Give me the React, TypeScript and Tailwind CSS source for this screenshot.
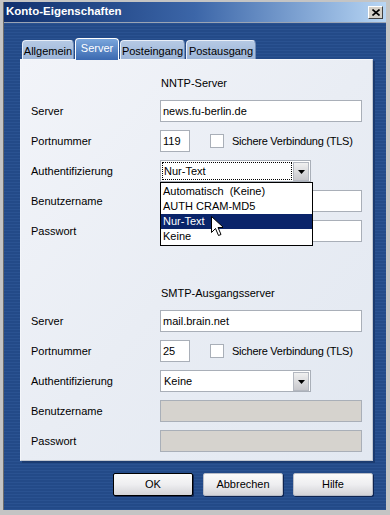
import React from 'react';

const font = "font-['Liberation_Sans',Arial,sans-serif]";

function Label({ text }: { text: string }) {
  return <div className="w-[129px] shrink-0 text-[11px] leading-[14px] text-black">{text}</div>;
}

function TextBox({ value = '', width = 'w-[202px]', disabled = false }: { value?: string; width?: string; disabled?: boolean }) {
  return (
    <div
      className={`${width} flex h-[22px] items-center border border-[#a9afb8] pl-[2px] text-[11px] text-black ${
        disabled ? 'bg-[#d6d3ce]' : 'bg-white'
      }`}
    >
      {value}
    </div>
  );
}

function CheckBox() {
  return (
    <div className="ml-[20px] flex items-center gap-[8px]">
      <div className="h-[14px] w-[14px] border border-[#a9afb8] bg-white" />
      <span className="text-[11px] leading-[14px] tracking-[-0.25px] text-black">Sichere Verbindung (TLS)</span>
    </div>
  );
}

function DropArrow() {
  return (
    <div className="my-[1px] mr-[1px] flex h-[19px] w-[16px] items-center justify-center border border-[#b4b8c0] bg-linear-to-b from-[#f0f0f0] to-[#c8c8cc]">
      <svg width="7" height="4" viewBox="0 0 7 4">
        <path d="M0 0h7L3.5 4z" fill="#000" />
      </svg>
    </div>
  );
}

function Select({ value, open = false }: { value: string; open?: boolean }) {
  const items = ['Automatisch  (Keine)', 'AUTH CRAM-MD5', 'Nur-Text', 'Keine'];
  return (
    <div className="relative">
      <div className="flex h-[22px] w-[151px] items-stretch border border-[#a9afb8] bg-white">
        <div className={`m-[1px] flex flex-1 items-center pl-[1px] text-[11px] text-black ${open ? 'border border-dotted border-black' : 'pl-[2px]'}`}>
          {value}
        </div>
        <DropArrow />
      </div>
      {open && (
        <div className="absolute left-0 top-full z-10 w-[153px] border border-black bg-white py-[1px]">
          {items.map((it) => (
            <div
              key={it}
              className={`h-[15px] whitespace-pre pl-[2px] text-[11px] leading-[15px] ${
                it === value ? 'bg-[#0a246a] text-white' : 'text-black'
              }`}
            >
              {it}
            </div>
          ))}
        </div>
      )}
    </div>
  );
}

function Row({ label, children }: { label: string; children: React.ReactNode }) {
  return (
    <div className="flex h-[22px] items-center">
      <Label text={label} />
      {children}
    </div>
  );
}

function ServerBlock({ title, server, port, auth, open, disabled }: { title: string; server: string; port: string; auth: string; open?: boolean; disabled?: boolean }) {
  return (
    <div className="flex flex-col">
      <div className="pl-[130px] text-[11px] leading-[14px] text-black">{title}</div>
      <div className="mt-[10px] flex flex-col gap-[8px]">
        <Row label="Server">
          <TextBox value={server} />
        </Row>
        <Row label="Portnummer">
          <TextBox value={port} width="w-[30px]" />
          <CheckBox />
        </Row>
        <Row label="Authentifizierung">
          <Select value={auth} open={open} />
        </Row>
        <Row label="Benutzername">
          <TextBox disabled={disabled} />
        </Row>
        <Row label="Passwort">
          <TextBox disabled={disabled} />
        </Row>
      </div>
    </div>
  );
}

function Tab({ text, active = false, width }: { text: string; active?: boolean; width: string }) {
  if (active) {
    return (
      <div
        className={`${width} relative z-10 mb-[-1px] flex h-[22px] items-start justify-center rounded-t-[4px] border border-b-0 border-white bg-linear-to-b from-[#7aa6dc] to-[#3b69b0] pt-[2px] text-[11px] leading-[14px] text-white`}
      >
        {text}
      </div>
    );
  }
  return (
    <div
      className={`${width} flex h-[19px] items-center justify-center rounded-t-[4px] border border-b-0 border-[#e8eef8] border-r-[#6f8ab4] bg-linear-to-b from-[#b5c9e4] to-[#9db5d8] pt-[2px] text-[11px] leading-[14px] text-black`}
    >
      {text}
    </div>
  );
}

function Button({ text, isDefault = false }: { text: string; isDefault?: boolean }) {
  return (
    <div
      className={`flex h-[23px] w-[80px] items-center justify-center rounded-[2px] border bg-linear-to-b from-[#fafafa] via-[#eeeef0] to-[#d4d4d8] text-[11px] text-black shadow-[1px_1px_0_#0f2450] ${
        isDefault ? 'border-black' : 'border-[#b8bcc6]'
      }`}
    >
      {text}
    </div>
  );
}

function Cursor() {
  return (
    <svg className="absolute left-[210px] top-[215px] z-20" width="13" height="22" viewBox="0 0 13 22">
      <path d="M1.5 1.5v16l4-4 3 7 2.5-1-3-7h5.5z" fill="#fff" stroke="#000" strokeWidth="1" strokeLinejoin="miter" />
    </svg>
  );
}

export default function App() {
  return (
    <div className={`${font} relative h-[515px] w-[390px] overflow-hidden bg-[#c4c4c4] pb-[5px] pl-[3px] pr-[4px] pt-[2px]`}>
      <div className="flex h-full flex-col border-l border-[#6c6c6c]">
        <div className="flex h-[20px] items-center justify-between bg-linear-to-r from-[#10306e] via-[#3c66a8] to-[#b8d6f4] pl-[2px] pr-[3px]">
          <span className="text-[11.5px] font-bold text-white">Konto-Eigenschaften</span>
          <div className="flex h-[13px] w-[15px] items-center justify-center border border-t-white border-l-white border-b-[#404040] border-r-[#404040] bg-[#d4d0c8]">
            <svg width="8" height="7" viewBox="0 0 8 7">
              <path d="M0.5 0.5l7 6M7.5 0.5l-7 6" stroke="#000" strokeWidth="1.6" />
            </svg>
          </div>
        </div>
        <div className="h-px bg-[#9aa4b4]" />
        <div className="flex flex-1 flex-col bg-[#28508f] bg-[repeating-linear-gradient(0deg,#2a5291_0px,#2a5291_1px,#234a88_1px,#234a88_3px)] pl-[16px] pt-[15px]">
          <div className="flex h-[21px] items-end gap-[1px] pl-[2px]">
            <Tab text="Allgemein" width="w-[52px]" />
            <Tab text="Server" active width="w-[44px]" />
            <Tab text="Posteingang" width="w-[65px]" />
            <Tab text="Postausgang" width="w-[70px]" />
          </div>
          <div className="h-[402px] w-[353px] border border-[#f4f6fa] border-b-[#c0c6d0] border-r-[#c0c6d0] bg-linear-to-br from-[#f2f4f9] via-[#e9edf4] to-[#e2e8f1] pl-[10px] pt-[16px] shadow-[2px_2px_0_#1b3b70]">
            <ServerBlock title="NNTP-Server" server="news.fu-berlin.de" port="119" auth="Nur-Text" open />
            <div className="mt-[44px]">
              <ServerBlock title="SMTP-Ausgangsserver" server="mail.brain.net" port="25" auth="Keine" disabled />
            </div>
          </div>
          <div className="mt-[12px] flex w-[353px] justify-end gap-[10px]">
            <Button text="OK" isDefault />
            <Button text="Abbrechen" />
            <Button text="Hilfe" />
          </div>
        </div>
      </div>
      <Cursor />
    </div>
  );
}
